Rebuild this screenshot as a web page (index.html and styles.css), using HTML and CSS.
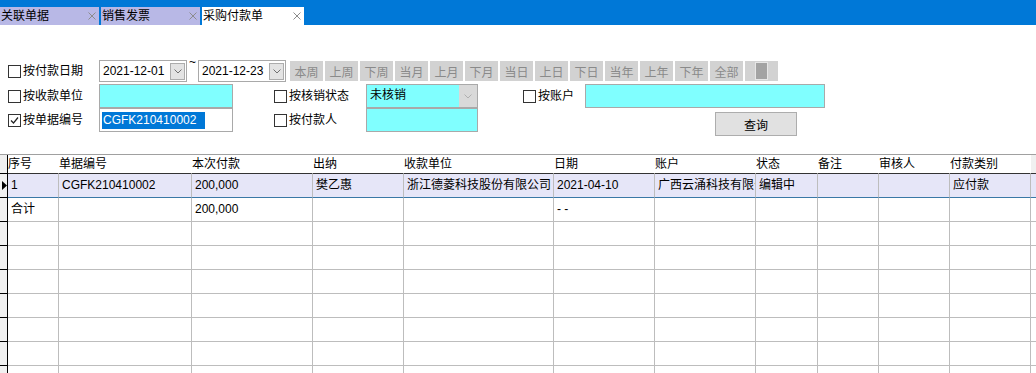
FILE: index.html
```html
<!DOCTYPE html>
<html>
<head>
    <meta charset="UTF-8">
    <title>采购付款单</title>
    <link rel="stylesheet" href="styles.css">
</head>
<body>
    <div class="tabbar">
        <div class="tab">关联单据<svg class="tab-close" width="8" height="8"><path d="M0.5 0.5L7.5 7.5M7.5 0.5L0.5 7.5"/></svg></div>
        <div class="tab">销售发票<svg class="tab-close" width="8" height="8"><path d="M0.5 0.5L7.5 7.5M7.5 0.5L0.5 7.5"/></svg></div>
        <div class="tab active">采购付款单<svg class="tab-close" width="8" height="8"><path d="M0.5 0.5L7.5 7.5M7.5 0.5L0.5 7.5"/></svg></div>
    </div>

    <div class="filters">
        <div class="frow r1">
            <label class="chk"><span class="box"></span>按付款日期</label>
            <div class="combo">
                <span>2021-12-01</span>
                <span class="drop"><svg width="8" height="5"><polyline points="0.5,0.5 4,4 7.5,0.5"/></svg></span>
            </div>
            <span class="tilde">~</span>
            <div class="combo">
                <span>2021-12-23</span>
                <span class="drop"><svg width="8" height="5"><polyline points="0.5,0.5 4,4 7.5,0.5"/></svg></span>
            </div>
            <div class="quick">
                <span class="qbtn">本周</span>
                <span class="qbtn">上周</span>
                <span class="qbtn">下周</span>
                <span class="qbtn">当月</span>
                <span class="qbtn">上月</span>
                <span class="qbtn">下月</span>
                <span class="qbtn">当日</span>
                <span class="qbtn">上日</span>
                <span class="qbtn">下日</span>
                <span class="qbtn">当年</span>
                <span class="qbtn">上年</span>
                <span class="qbtn">下年</span>
                <span class="qbtn">全部</span>
                <span class="qbtn"><span class="qicon"></span></span>
            </div>
        </div>

        <div class="frow r2">
            <label class="chk"><span class="box"></span>按收款单位</label>
            <div class="input cyan w134"></div>
            <label class="chk mid"><span class="box"></span>按核销状态</label>
            <div class="select">
                <span class="select-val">未核销</span>
                <span class="select-drop"><svg width="8" height="5"><polyline points="0.5,0.5 4,4 7.5,0.5"/></svg></span>
            </div>
            <label class="chk acct"><span class="box"></span>按账户</label>
            <div class="input cyan w240"></div>
        </div>

        <div class="frow r3">
            <label class="chk"><span class="box checked"><svg width="11" height="11"><polyline points="2,5.5 4.5,8 9,2.5"/></svg></span>按单据编号</label>
            <div class="input w134"><span class="sel">CGFK210410002</span></div>
            <label class="chk mid"><span class="box"></span>按付款人</label>
            <div class="input cyan w112"></div>
            <button class="query">查询</button>
        </div>
    </div>

    <div class="grid">
        <div class="grow head">
            <div class="ind"></div>
            <div class="cell">序号</div>
            <div class="cell">单据编号</div>
            <div class="cell">本次付款</div>
            <div class="cell">出纳</div>
            <div class="cell">收款单位</div>
            <div class="cell">日期</div>
            <div class="cell">账户</div>
            <div class="cell">状态</div>
            <div class="cell">备注</div>
            <div class="cell">审核人</div>
            <div class="cell">付款类别</div>
            <div class="cell fill"></div>
        </div>
        <div class="grow cur">
            <div class="ind"><svg width="5" height="9"><path d="M0 0L5 4.5L0 9Z"/></svg></div>
            <div class="cell">1</div>
            <div class="cell">CGFK210410002</div>
            <div class="cell">200,000</div>
            <div class="cell">樊乙惠</div>
            <div class="cell">浙江德菱科技股份有限公司</div>
            <div class="cell">2021-04-10</div>
            <div class="cell">广西云涌科技有限公司</div>
            <div class="cell">编辑中</div>
            <div class="cell"></div>
            <div class="cell"></div>
            <div class="cell">应付款</div>
            <div class="cell fill"></div>
        </div>
        <div class="grow">
            <div class="ind"></div>
            <div class="cell">合计</div>
            <div class="cell"></div>
            <div class="cell">200,000</div>
            <div class="cell"></div>
            <div class="cell"></div>
            <div class="cell">- -</div>
            <div class="cell"></div>
            <div class="cell"></div>
            <div class="cell"></div>
            <div class="cell"></div>
            <div class="cell"></div>
            <div class="cell fill"></div>
        </div>
        <div class="grow"><div class="ind"></div><div class="cell"></div><div class="cell"></div><div class="cell"></div><div class="cell"></div><div class="cell"></div><div class="cell"></div><div class="cell"></div><div class="cell"></div><div class="cell"></div><div class="cell"></div><div class="cell"></div><div class="cell fill"></div></div>
        <div class="grow"><div class="ind"></div><div class="cell"></div><div class="cell"></div><div class="cell"></div><div class="cell"></div><div class="cell"></div><div class="cell"></div><div class="cell"></div><div class="cell"></div><div class="cell"></div><div class="cell"></div><div class="cell"></div><div class="cell fill"></div></div>
        <div class="grow"><div class="ind"></div><div class="cell"></div><div class="cell"></div><div class="cell"></div><div class="cell"></div><div class="cell"></div><div class="cell"></div><div class="cell"></div><div class="cell"></div><div class="cell"></div><div class="cell"></div><div class="cell"></div><div class="cell fill"></div></div>
        <div class="grow"><div class="ind"></div><div class="cell"></div><div class="cell"></div><div class="cell"></div><div class="cell"></div><div class="cell"></div><div class="cell"></div><div class="cell"></div><div class="cell"></div><div class="cell"></div><div class="cell"></div><div class="cell"></div><div class="cell fill"></div></div>
        <div class="grow"><div class="ind"></div><div class="cell"></div><div class="cell"></div><div class="cell"></div><div class="cell"></div><div class="cell"></div><div class="cell"></div><div class="cell"></div><div class="cell"></div><div class="cell"></div><div class="cell"></div><div class="cell"></div><div class="cell fill"></div></div>
        <div class="grow"><div class="ind"></div><div class="cell"></div><div class="cell"></div><div class="cell"></div><div class="cell"></div><div class="cell"></div><div class="cell"></div><div class="cell"></div><div class="cell"></div><div class="cell"></div><div class="cell"></div><div class="cell"></div><div class="cell fill"></div></div>
        <div class="grow"><div class="ind"></div><div class="cell"></div><div class="cell"></div><div class="cell"></div><div class="cell"></div><div class="cell"></div><div class="cell"></div><div class="cell"></div><div class="cell"></div><div class="cell"></div><div class="cell"></div><div class="cell"></div><div class="cell fill"></div></div>
    </div>
</body>
</html>
```

FILE: styles.css
```css
body {
    margin: 0;
    font-family: "Liberation Sans", "Noto Sans CJK SC", sans-serif;
    font-size: 12px;
    color: #000;
    background: #fff;
    overflow: hidden;
}

/* tabs */
.tabbar {
    height: 25px;
    background: #0078d7;
    display: flex;
    align-items: flex-end;
}

.tab {
    flex: none;
    width: 99px;
    height: 18px;
    margin-right: 2px;
    padding: 0 3px 0 1px;
    box-sizing: border-box;
    background: #b8b8e6;
    display: flex;
    align-items: center;
    justify-content: space-between;
    line-height: 18px;
}

.tab.active {
    width: 102px;
    background: #fff;
}

.tab-close path {
    stroke: #8c8c8c;
    stroke-width: 1;
    fill: none;
}

/* filter form */
.filters {
    padding-top: 35px;
}

.frow {
    display: flex;
    align-items: center;
}

.r1 { height: 22px; }
.r2 { height: 24px; margin-top: 2px; }
.r3 { height: 24px; }

.chk {
    flex: none;
    display: flex;
    align-items: center;
    width: 91px;
    margin-left: 8px;
    line-height: 16px;
}

.chk.mid {
    width: 92px;
    margin-left: 41px;
}

.chk.acct {
    width: 62px;
    margin-left: 45px;
}

.box {
    width: 13px;
    height: 13px;
    box-sizing: border-box;
    border: 1px solid #333;
    background: #fff;
    margin-right: 2px;
    display: flex;
}

.box svg polyline {
    fill: none;
    stroke: #222;
    stroke-width: 1.2;
}

.combo {
    flex: none;
    width: 88px;
    height: 22px;
    box-sizing: border-box;
    border: 1px solid #a9a9a9;
    padding-left: 3px;
    display: flex;
    align-items: center;
    justify-content: space-between;
}

.drop {
    width: 15px;
    height: 17px;
    margin-right: 1px;
    box-sizing: border-box;
    border: 1px solid #acacac;
    background: #e3e3e3;
    display: flex;
    align-items: center;
    justify-content: center;
}

.drop polyline,
.select-drop polyline {
    fill: none;
    stroke: #707070;
    stroke-width: 1;
}

.tilde {
    flex: none;
    width: 11px;
    align-self: flex-start;
    text-align: center;
    line-height: 8px;
    margin-top: -2px;
}

.quick {
    display: flex;
    gap: 2px;
    margin-left: 4px;
}

.qbtn {
    width: 33px;
    height: 20px;
    background: #d2d2d2;
    color: #8a8a8a;
    display: flex;
    align-items: center;
    justify-content: center;
}

.qicon {
    width: 13px;
    height: 18px;
    box-sizing: border-box;
    border: 1px solid #e6e6e6;
    background: #a3a3a3;
}

.input {
    flex: none;
    height: 24px;
    box-sizing: border-box;
    border: 1px solid #a9a9a9;
    background: #fff;
    display: flex;
    align-items: center;
}

.cyan { background: #80ffff; }
.w112 { width: 112px; }
.w134 { width: 134px; }
.w240 { width: 240px; }

.sel {
    margin-left: 2px;
    padding: 0 9px 0 1px;
    line-height: 17px;
    background: #0078d7;
    color: #fff;
}

.select {
    flex: none;
    width: 112px;
    height: 24px;
    box-sizing: border-box;
    border: 1px solid #a9a9a9;
    display: flex;
}

.select-val {
    flex: 1;
    background: #80ffff;
    padding-left: 3px;
    line-height: 21px;
}

.select-drop {
    width: 18px;
    background: #d9d9d9;
    display: flex;
    align-items: center;
    justify-content: center;
}

.select-drop polyline {
    stroke: #b0b0b0;
}

.query {
    flex: none;
    align-self: flex-start;
    width: 82px;
    height: 24px;
    margin: 4px 0 0 237px;
    border: 1px solid #adadad;
    background: #e1e1e1;
    font-family: inherit;
    font-size: 12px;
    color: #000;
    padding: 0;
}

/* data grid */
.grid {
    margin-top: 22px;
}

.grow {
    display: grid;
    grid-template-columns: 8px 51px 133px 121px 91px 150px 101px 101px 62px 61px 71px 81px 1fr;
    height: 24px;
}

.cell {
    box-sizing: border-box;
    border-right: 1px solid #bdbdbd;
    border-bottom: 1px solid #bdbdbd;
    padding-left: 3px;
    line-height: 23px;
    white-space: nowrap;
    overflow: hidden;
}

.cell.fill {
    border-right: none;
}

.ind {
    box-sizing: border-box;
    background: #f0f0f0;
    border-right: 1px solid #000;
    border-bottom: 1px solid #000;
    display: flex;
    align-items: center;
    padding-left: 2px;
}

.head {
    height: 20px;
    box-sizing: border-box;
    border-top: 1px solid #a0a0a0;
}

.head .cell {
    border-right-color: transparent;
    border-bottom-color: #333;
    padding-left: 0;
    line-height: 18px;
}

.head .cell.fill {
    background: #f0f0f0;
}

.cur .cell {
    background: #e6e6f8;
    border-bottom-color: #3a78a6;
}
```
